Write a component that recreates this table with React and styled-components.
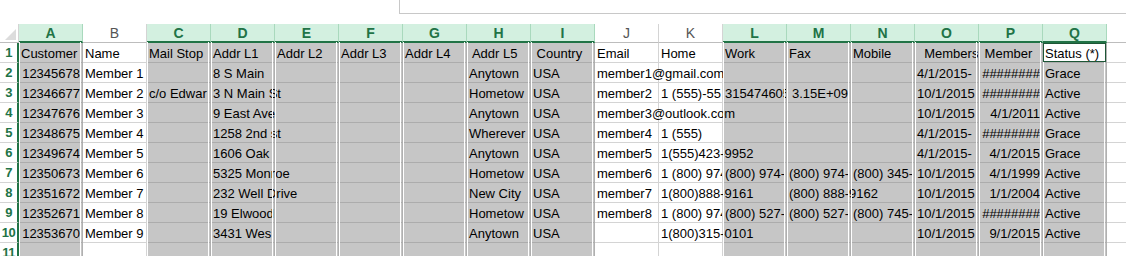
import styled, { createGlobalStyle } from 'styled-components';

const COLS = 'ABCDEFGHIJKLMNOPQ'.split('');
const SELECTED = new Set(['A', 'C', 'D', 'E', 'F', 'G', 'H', 'I', 'L', 'M', 'N', 'O', 'P', 'Q']);
const COL_W = 64;
const GREEN = '#217346';
const FILL = '#c6c6c6';

// r: right aligned (numbers / dates)
const n = (t) => ({ t, r: true });

const ROWS = [
  {
    A: 'Customer', B: 'Name', C: 'Mail Stop', D: 'Addr L1', E: 'Addr L2', F: 'Addr L3', G: 'Addr L4',
    H: ' Addr L5', I: ' Country', J: 'Email', K: 'Home', L: 'Work', M: 'Fax', N: 'Mobile',
    O: '  Members', P: ' Member', Q: 'Status (*)',
  },
  {
    A: n('12345678'), B: 'Member 1', D: '8 S Main', H: 'Anytown', I: 'USA', J: 'member1@gmail.com',
    O: '4/1/2015-', P: n('########'), Q: 'Grace',
  },
  {
    A: n('12346677'), B: 'Member 2', C: 'c/o Edwar', D: '3 N Main St', H: 'Hometow', I: 'USA',
    J: 'member2', K: '1 (555)-55', L: '315474605', M: n('3.15E+09'), O: '10/1/2015',
    P: n('########'), Q: 'Active',
  },
  {
    A: n('12347676'), B: 'Member 3', D: '9 East Ave', H: 'Anytown', I: 'USA', J: 'member3@outlook.com',
    O: '10/1/2015', P: n('4/1/2011'), Q: 'Active',
  },
  {
    A: n('12348675'), B: 'Member 4', D: '1258 2nd st', H: 'Wherever', I: 'USA', J: 'member4',
    K: '1 (555)', O: '4/1/2015-', P: n('########'), Q: 'Grace',
  },
  {
    A: n('12349674'), B: 'Member 5', D: '1606 Oak', H: 'Anytown', I: 'USA', J: 'member5',
    K: '1(555)423-9952', O: '4/1/2015-', P: n('4/1/2015'), Q: 'Grace',
  },
  {
    A: n('12350673'), B: 'Member 6', D: '5325 Monroe', H: 'Hometow', I: 'USA', J: 'member6',
    K: '1 (800) 974', L: '(800) 974-', M: '(800) 974-', N: '(800) 345-', O: '10/1/2015',
    P: n('4/1/1999'), Q: 'Active',
  },
  {
    A: n('12351672'), B: 'Member 7', D: '232 Well Drive', H: 'New City', I: 'USA', J: 'member7',
    K: '1(800)888-9161', M: '(800) 888-9162', O: '10/1/2015', P: n('1/1/2004'), Q: 'Active',
  },
  {
    A: n('12352671'), B: 'Member 8', D: '19 Elwood', H: 'Hometow', I: 'USA', J: 'member8',
    K: '1 (800) 974', L: '(800) 527-', M: '(800) 527-', N: '(800) 745-', O: '10/1/2015',
    P: n('########'), Q: 'Active',
  },
  {
    A: n('12353670'), B: 'Member 9', D: '3431 Wes', H: 'Anytown', I: 'USA',
    K: '1(800)315-0101', O: '10/1/2015', P: n('9/1/2015'), Q: 'Active',
  },
  {},
];

const GlobalStyle = createGlobalStyle`
  html, body {
    margin: 0;
    overflow: hidden;
    background: #fff;
  }
  body {
    font-family: 'Liberation Sans', Arial, sans-serif;
    font-size: 13px;
    color: #000;
  }
`;

const Sheet = styled.div`
  width: 1126px;
`;

const FormulaStrip = styled.div`
  display: flex;
  height: 24px;
`;

const FormulaSpacer = styled.div`
  width: 399px;
  flex: none;
`;

const FormulaBox = styled.div`
  flex: 1;
  height: 14px;
  box-sizing: border-box;
  border-left: 1px solid #c8c8c8;
  border-bottom: 1px solid #c8c8c8;
`;

const HeadRow = styled.div`
  display: flex;
  height: 19px;
`;

const Corner = styled.div`
  width: 19px;
  flex: none;
  box-sizing: border-box;
  border-right: 1px solid #d4d4d4;
  border-bottom: 1px solid #bdbdbd;
  display: flex;
  align-items: flex-end;
  justify-content: flex-end;
  padding: 0 2px 2px 0;
`;

const ColHead = styled.div`
  width: ${COL_W}px;
  flex: none;
  box-sizing: border-box;
  background: ${(p) => (p.$sel ? '#d3f0e0' : '#fff')};
  color: ${(p) => (p.$sel ? GREEN : '#555')};
  font-weight: ${(p) => (p.$sel ? 700 : 400)};
  font-size: 14px;
  text-align: center;
  line-height: 18px;
  border-right: 1px solid ${(p) => (p.$sel ? '#a9d9bd' : '#d4d4d4')};
  border-bottom: ${(p) => (p.$sel ? `2px solid ${GREEN}` : '1px solid #bdbdbd')};
`;

const HeadFiller = styled.div`
  flex: 1;
  border-bottom: 1px solid #bdbdbd;
`;

const Row = styled.div`
  display: flex;
  height: 20px;
`;

const RowHead = styled.div`
  width: 19px;
  flex: none;
  box-sizing: border-box;
  border-right: 2px solid ${GREEN};
  border-bottom: 1px solid #d4d4d4;
  color: ${GREEN};
  font-weight: 700;
  font-size: 13px;
  text-align: center;
  line-height: 20px;
  letter-spacing: -0.5px;
`;

const Cell = styled.div`
  position: relative;
  width: ${COL_W}px;
  flex: none;
  box-sizing: border-box;
  background: ${(p) => (p.$active ? '#fff' : p.$sel ? FILL : '#fff')};
  border-right: 1px solid ${(p) => (p.$sel ? '#b0b0b0' : '#d4d4d4')};
  border-bottom: 1px solid ${(p) => (p.$sel ? '#acacac' : '#d4d4d4')};

  &::after {
    content: '';
    display: ${(p) => (p.$sel ? 'block' : 'none')};
    position: absolute;
    z-index: 2;
    top: ${(p) => (p.$active ? '0' : '-1px')};
    bottom: ${(p) => (p.$active ? '0' : '-1px')};
    left: 0;
    right: ${(p) => (p.$active ? '0' : '1px')};
    border-left: 1px solid ${(p) => (p.$active ? '#1d5636' : '#fff')};
    border-right: 1px solid ${(p) => (p.$active ? '#1d5636' : '#fff')};
    border-top: ${(p) => (p.$active ? '1px solid #1d5636' : 'none')};
    border-bottom: ${(p) => (p.$active ? '1px solid #1d5636' : 'none')};
  }
`;

const CellText = styled.span`
  position: relative;
  z-index: 1;
  display: block;
  box-sizing: border-box;
  width: ${(p) => p.$span * COL_W - 1}px;
  height: 19px;
  padding: 0 2px 0 ${(p) => (p.$right ? 0 : 2)}px;
  line-height: 21px;
  white-space: pre;
  overflow: hidden;
  text-align: ${(p) => (p.$right ? 'right' : 'left')};
`;

const RowFiller = styled.div`
  flex: 1;
  border-bottom: 1px solid #d4d4d4;
  background-image: linear-gradient(#d4d4d4, #d4d4d4);
  background-size: 1px 100%;
  background-repeat: no-repeat;
  background-position: ${COL_W - 1}px 0;
`;

const CornerMark = () => (
  <svg width="11" height="11" viewBox="0 0 11 11">
    <polygon points="11,0 11,11 0,11" fill="#dcdcdc" />
  </svg>
);

const spanFor = (row, idx) => {
  let span = 1;
  for (let i = idx + 1; i < COLS.length; i += 1) {
    if (row[COLS[i]] !== undefined) break;
    span += 1;
  }
  return span;
};

const SheetRow = ({ row, num }) => (
  <Row>
    <RowHead>{num}</RowHead>
    {COLS.map((c, idx) => {
      const v = row[c];
      const right = typeof v === 'object';
      const text = right ? v.t : v;
      const active = num === 1 && c === 'Q';
      return (
        <Cell key={c} $sel={SELECTED.has(c)} $active={active}>
          {text !== undefined && (
            <CellText $right={right} $span={right ? 1 : spanFor(row, idx)}>
              {text}
            </CellText>
          )}
        </Cell>
      );
    })}
    <RowFiller />
  </Row>
);

const App = () => (
  <Sheet>
    <GlobalStyle />
    <FormulaStrip>
      <FormulaSpacer />
      <FormulaBox />
    </FormulaStrip>
    <HeadRow>
      <Corner>
        <CornerMark />
      </Corner>
      {COLS.map((c) => (
        <ColHead key={c} $sel={SELECTED.has(c)}>
          {c}
        </ColHead>
      ))}
      <HeadFiller />
    </HeadRow>
    {ROWS.map((row, i) => (
      <SheetRow key={i} row={row} num={i + 1} />
    ))}
  </Sheet>
);

export default App;
